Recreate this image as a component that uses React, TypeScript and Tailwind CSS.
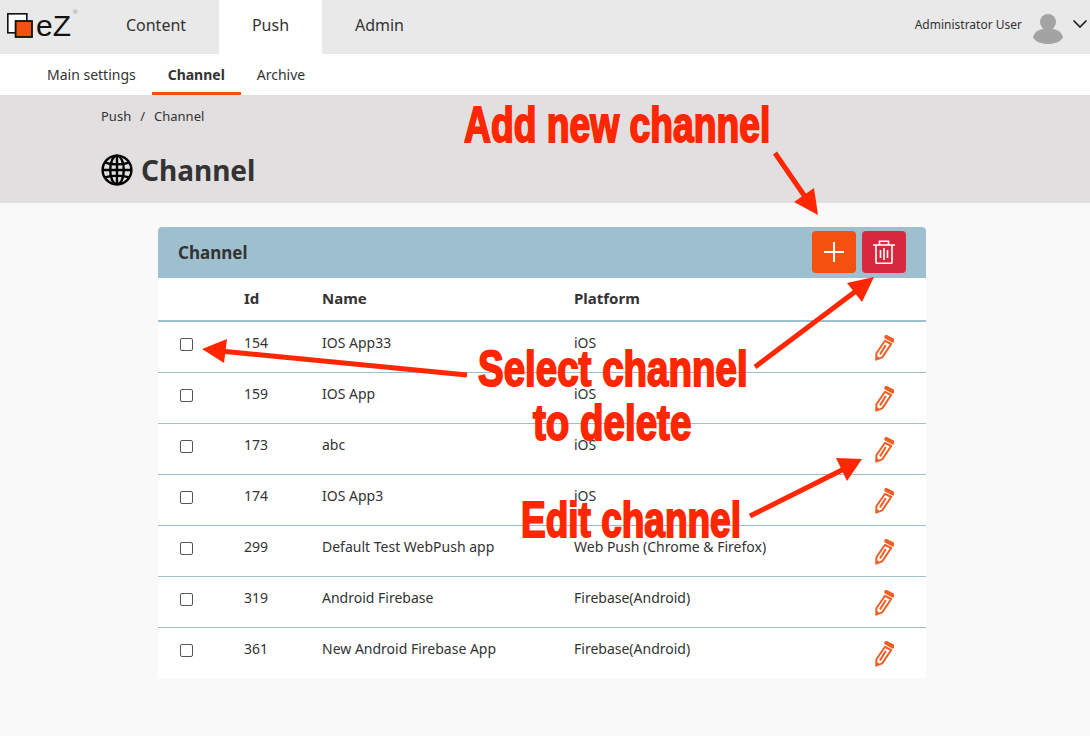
import React from 'react';

const rows = [
  { id: 154, name: 'IOS App33', platform: 'iOS' },
  { id: 159, name: 'IOS App', platform: 'iOS' },
  { id: 173, name: 'abc', platform: 'iOS' },
  { id: 174, name: 'IOS App3', platform: 'iOS' },
  { id: 299, name: 'Default Test WebPush app', platform: 'Web Push (Chrome & Firefox)' },
  { id: 319, name: 'Android Firebase', platform: 'Firebase(Android)' },
  { id: 361, name: 'New Android Firebase App', platform: 'Firebase(Android)' },
];

const Logo = () => (
  <div className="relative flex h-[54px] w-[93px] shrink-0 items-start">
    <svg width="26" height="25" viewBox="0 0 26 25" className="ml-[7px] mt-[13px]">
      <rect x="0.8" y="0.8" width="19" height="19" fill="#fff" stroke="#111" strokeWidth="1.6" />
      <rect x="8.6" y="8" width="16.4" height="16" fill="#f45110" stroke="#111" strokeWidth="1.8" />
    </svg>
    <span className="ml-[3px] mt-[11px] font-['Liberation_Sans',sans-serif] text-[30px] leading-none text-[#111]">eZ</span>
    <span className="absolute left-[73px] top-[9px] font-['Liberation_Sans',sans-serif] text-[6px] leading-none text-[#888]">®</span>
  </div>
);

const Globe = () => (
  <svg width="32" height="32" viewBox="0 0 32 32" fill="none" stroke="#000" strokeWidth="2.4">
    <circle cx="16" cy="16" r="14.4" />
    <ellipse cx="16" cy="16" rx="6.8" ry="14.4" />
    <path d="M16 1.6V30.4M1.6 16H30.4M4 8.6C11 11 21 11 28 8.6M4 23.4C11 21 21 21 28 23.4" />
  </svg>
);

const Pencil = () => (
  <svg width="20" height="26" viewBox="0 0 20 26" fill="none" stroke="#ee5f26" strokeWidth="2">
    <path d="M12.4 2L18.8 5.4" strokeWidth="4.2" strokeLinecap="round" />
    <path d="M11 5.8L17.2 9L8.2 22.4L2.2 24.6L2.4 18.2Z" strokeLinejoin="round" />
    <path d="M11.8 10L6 19.4" />
    <path d="M2.4 24.4L2.6 20.8L5.6 23.2Z" fill="#ee5f26" stroke="none" />
  </svg>
);

const TrashIcon = () => (
  <svg width="22" height="24" viewBox="0 0 22 24" fill="none" stroke="#fff" strokeWidth="1.6">
    <path d="M0 5H22M6.5 5V1.2H15.5V5M3 5V22.6C3 23.2 3.4 23.4 4 23.4H18C18.6 23.4 19 23.2 19 22.6V5" />
    <path d="M7.5 10V18M11 8V20M14.5 10V18" />
  </svg>
);

const Annotations = () => (
  <svg width="1090" height="736" viewBox="0 0 1090 736" className="pointer-events-none absolute left-0 top-0" fill="#ff2600" stroke="none">
    <path d="M775 153L810 204" stroke="#ff2600" strokeWidth="5" />
    <path d="M818 215L794 202L814 188Z" />
    <path d="M755 367L860 288" stroke="#ff2600" strokeWidth="5" />
    <path d="M874 277L847 283L862 302Z" />
    <path d="M467 375L220 351" stroke="#ff2600" strokeWidth="5" />
    <path d="M202 349L227 339L224 363Z" />
    <path d="M750 516L848 467" stroke="#ff2600" strokeWidth="5" />
    <path d="M862 459L836 458L847 481Z" />
  </svg>
);

const callout = "absolute whitespace-nowrap origin-top-left font-['Liberation_Sans',sans-serif] text-[50px] font-bold leading-[50px] text-[#ff2600] [-webkit-text-stroke:2px_#ff2600]";

export default function App() {
  return (
    <div className="relative min-h-[736px] bg-[#f9f9f9] font-['Noto_Sans',sans-serif] text-[#333]">
      {/* top bar */}
      <div className="flex h-[54px] items-stretch bg-[#e9e9e9]">
        <Logo />
        <div className="flex w-[126px] items-center justify-center pb-[4px] text-base">Content</div>
        <div className="flex w-[103px] items-center justify-center bg-white pb-[4px] text-base">Push</div>
        <div className="flex w-[115px] items-center justify-center pb-[4px] text-base">Admin</div>
        <div className="ml-auto flex items-center pr-[2px]">
          <span className="mb-[5px] text-xs">Administrator User</span>
          <svg width="32" height="32" viewBox="0 0 32 32" fill="#a3a3a3" className="ml-[10px] mt-[4px]">
            <circle cx="16" cy="9" r="8" />
            <path d="M1 24C3 17 10 15.5 16 15.5C22 15.5 29 17 31 24C29 29 22 31 16 31C10 31 3 29 1 24Z" />
          </svg>
          <svg width="16" height="10" viewBox="0 0 16 10" fill="none" stroke="#222" strokeWidth="1.7" className="mb-[6px] ml-[8px]">
            <path d="M1.5 1.5L8 8L14.5 1.5" />
          </svg>
        </div>
      </div>

      {/* sub nav */}
      <div className="flex h-[41px] items-stretch bg-white pl-[47px] text-sm">
        <div className="flex items-center">Main settings</div>
        <div className="ml-[16px] flex w-[89px] items-center justify-center border-b-[3px] border-[#f45110] pt-[3px] font-bold">Channel</div>
        <div className="ml-[16px] flex items-center">Archive</div>
      </div>

      {/* page title */}
      <div className="h-[108px] bg-[#e1dfe0] pl-[101px] pt-[12px]">
        <div className="flex text-[13px] leading-[18px]">
          <span>Push</span>
          <span className="mx-[9px]">/</span>
          <span>Channel</span>
        </div>
        <div className="mt-[25px] flex items-center gap-[8px]">
          <Globe />
          <h1 className="text-[28px] font-bold leading-[40px]">Channel</h1>
        </div>
      </div>

      {/* channel list */}
      <div className="ml-[158px] mt-[24px] w-[768px] bg-white">
        <div className="flex h-[51px] items-center justify-between rounded-t-[4px] bg-[#9ebfce] pl-[20px] pr-[20px]">
          <h2 className="text-[17px] font-bold">Channel</h2>
          <div className="mb-[1px] flex gap-[6px]">
            <button className="flex h-[42px] w-[44px] items-center justify-center rounded-[4px] bg-[#f45110]">
              <svg width="20" height="20" viewBox="0 0 20 20" stroke="#fff" strokeWidth="2">
                <path d="M10 0V20M0 10H20" />
              </svg>
            </button>
            <button className="flex h-[42px] w-[44px] items-center justify-center rounded-[4px] bg-[#d6283f]">
              <TrashIcon />
            </button>
          </div>
        </div>
        <table className="w-full table-fixed border-collapse text-sm">
          <colgroup>
            <col className="w-[86px]" />
            <col className="w-[78px]" />
            <col className="w-[252px]" />
            <col />
            <col className="w-[84px]" />
          </colgroup>
          <thead>
            <tr className="h-[43px] border-b-2 border-[#9ebfce] text-left text-[15px]">
              <th />
              <th className="font-bold">Id</th>
              <th className="font-bold">Name</th>
              <th className="font-bold">Platform</th>
              <th />
            </tr>
          </thead>
          <tbody>
            {rows.map((row, i) => (
              <tr key={row.id} className={i < rows.length - 1 ? 'h-[51px] border-b border-[#9ebfce]' : 'h-[51px]'}>
                <td className="pl-[22px]">
                  <input type="checkbox" className="mb-[5px] block h-[13px] w-[13px] appearance-none rounded-[2px] border border-[#555] bg-white" />
                </td>
                <td className="pb-[8px]">{row.id}</td>
                <td className="pb-[8px]">{row.name}</td>
                <td className="pb-[8px]">{row.platform}</td>
                <td className="pl-[32px] pt-[2px]">
                  <Pencil />
                </td>
              </tr>
            ))}
          </tbody>
        </table>
      </div>

      {/* red callouts */}
      <Annotations />
      <span className={`${callout} left-[464px] top-[100px] scale-x-[0.745]`}>Add new channel</span>
      <span className={`${callout} left-[478px] top-[344px] scale-x-[0.77]`}>Select channel</span>
      <span className={`${callout} left-[533px] top-[398px] scale-x-[0.77]`}>to delete</span>
      <span className={`${callout} left-[521px] top-[495px] scale-x-[0.74]`}>Edit channel</span>
    </div>
  );
}
